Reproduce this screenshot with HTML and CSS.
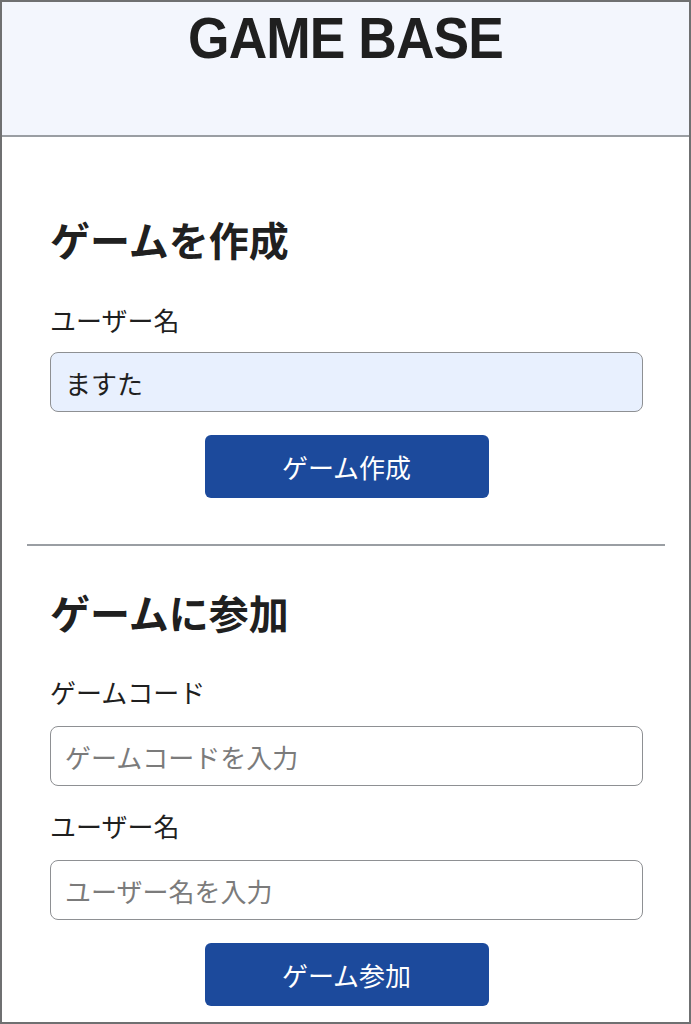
FILE: index.html
```html
<!DOCTYPE html>
<html lang="ja">
<head>
<meta charset="utf-8">
<title>GAME BASE</title>
<link rel="stylesheet" href="styles.css">
</head>
<body>
<div class="frame">
  <header class="site-header">
    <h1 class="site-title">GAME BASE</h1>
  </header>
  <main class="main">
    <section class="panel panel-create">
      <h2 class="panel-title">ゲームを作成</h2>
      <label class="field-label" for="create-name">ユーザー名</label>
      <input class="field-input is-filled" id="create-name" type="text" value="ますた">
      <div class="actions">
        <button class="btn" type="button">ゲーム作成</button>
      </div>
    </section>
    <hr class="divider">
    <section class="panel panel-join">
      <h2 class="panel-title">ゲームに参加</h2>
      <label class="field-label" for="join-code">ゲームコード</label>
      <input class="field-input" id="join-code" type="text" placeholder="ゲームコードを入力">
      <label class="field-label field-label-next" for="join-name">ユーザー名</label>
      <input class="field-input" id="join-name" type="text" placeholder="ユーザー名を入力">
      <div class="actions">
        <button class="btn" type="button">ゲーム参加</button>
      </div>
    </section>
  </main>
</div>
</body>
</html>
```

FILE: styles.css
```css
* {
  box-sizing: border-box;
}

html, body {
  margin: 0;
  padding: 0;
  background: #ffffff;
}

body {
  font-family: "Noto Sans CJK JP", "Noto Sans", sans-serif;
  color: #1f1f1f;
}

.frame {
  width: 691px;
  height: 1024px;
  border: 2px solid #6f7071;
  overflow: hidden;
  display: flex;
  flex-direction: column;
}

.site-header {
  height: 135px;
  flex: none;
  background: #f3f6fd;
  border-bottom: 2px solid #9a9ea3;
  padding-top: 7px;
}

.site-title {
  margin: 0;
  text-align: center;
  font-family: "Liberation Sans", Arial, sans-serif;
  font-weight: 700;
  font-size: 58px;
  line-height: 58px;
  letter-spacing: -1px;
  color: #1f1f1f;
  transform: scaleX(0.92);
}

.main {
  padding: 0 24px 0 25px;
}

.panel {
  padding: 0 22px 0 23px;
  display: flex;
  flex-direction: column;
}

.panel-create {
  padding-top: 79px;
}

.panel-join {
  padding-top: 43px;
}

.panel-title {
  margin: 0;
  font-size: 40px;
  line-height: 46px;
  font-weight: 700;
  color: #202020;
}

.panel-create .panel-title {
  margin-bottom: 42px;
}

.panel-join .panel-title {
  margin-bottom: 41px;
}

.field-label {
  display: block;
  font-size: 26px;
  line-height: 32px;
  color: #1f1f1f;
  margin-bottom: 16px;
}

.panel-join .field-label {
  margin-bottom: 18px;
}

.panel-join .field-label-next {
  margin-top: 24px;
}

.field-input {
  display: block;
  width: 100%;
  height: 60px;
  margin: 0;
  padding: 0 14px;
  border: 1.5px solid #8e9093;
  border-radius: 8px;
  background: #ffffff;
  font-family: "Noto Sans CJK JP", "Noto Sans", sans-serif;
  font-size: 26px;
  color: #1f1f1f;
  outline: none;
}

.field-input.is-filled {
  background: #e8f0fe;
}

.field-input::placeholder {
  color: #7b7b7b;
}

.actions {
  display: flex;
  justify-content: center;
  padding-top: 23px;
}

.btn {
  width: 284px;
  height: 63px;
  border: none;
  border-radius: 6px;
  background: #1c4a9c;
  color: #ffffff;
  font-family: "Noto Sans CJK JP", "Noto Sans", sans-serif;
  font-size: 26px;
  cursor: pointer;
}

.divider {
  margin: 46px 0 0;
  border: none;
  border-top: 2px solid #9a9ea3;
  height: 0;
}
```
